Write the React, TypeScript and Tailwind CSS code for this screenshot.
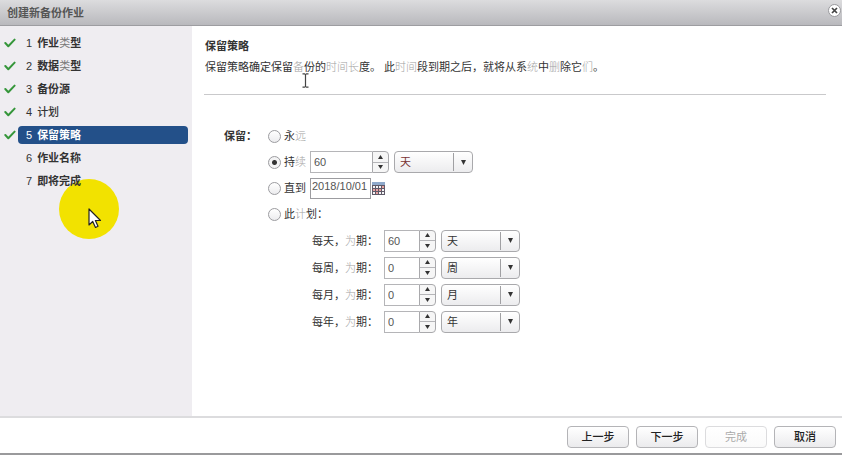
import { useState } from "react";
import type { ReactNode } from "react";

interface Step {
  id: number;
  title: ReactNode;
  done: boolean;
}

interface PlanRow {
  id: string;
  label: string;
  unit: string;
  value: number;
}

const Faint = ({ children }: { children: ReactNode }) => (
  <span className="font-light text-[#a3a3a3]">{children}</span>
);

const steps: Step[] = [
  { id: 1, title: <>作业<span className="font-normal text-[#777]">类</span>型</>, done: true },
  { id: 2, title: <>数据<span className="font-normal text-[#777]">类</span>型</>, done: true },
  { id: 3, title: "备份源", done: true },
  { id: 4, title: <span className="font-medium">计划</span>, done: true },
  { id: 5, title: "保留策略", done: true },
  { id: 6, title: "作业名称", done: false },
  { id: 7, title: "即将完成", done: false },
];

const planRows: PlanRow[] = [
  { id: "day", label: "每天，", unit: "天", value: 60 },
  { id: "week", label: "每周，", unit: "周", value: 0 },
  { id: "month", label: "每月，", unit: "月", value: 0 },
  { id: "year", label: "每年，", unit: "年", value: 0 },
];

const CheckIcon = () => (
  <svg width="12" height="10" viewBox="0 0 12 10" fill="none" aria-hidden="true">
    <path d="M1.3 5 L4.3 8.2 L10.6 1.6" stroke="#35963a" strokeWidth="2" strokeLinecap="round" strokeLinejoin="round" />
  </svg>
);

const CalendarIcon = () => (
  <svg width="13" height="13" viewBox="0 0 13 13" aria-hidden="true">
    <rect width="13" height="13" fill="#5f5a68" />
    <rect width="13" height="3" fill="#8fa9cb" />
    <g fill="#f4f4f6">
      <rect x="1" y="4" width="2" height="2" />
      <rect x="4" y="4" width="2" height="2" />
      <rect x="7" y="4" width="2" height="2" />
      <rect x="1" y="10" width="2" height="2" />
      <rect x="10" y="7" width="2" height="2" />
      <rect x="7" y="10" width="2" height="2" />
      <rect x="10" y="10" width="2" height="2" />
    </g>
    <g fill="#e9a0a0">
      <rect x="10" y="4" width="2" height="2" />
      <rect x="1" y="7" width="2" height="2" />
      <rect x="4" y="7" width="2" height="2" />
      <rect x="7" y="7" width="2" height="2" />
      <rect x="4" y="10" width="2" height="2" />
    </g>
  </svg>
);

const Spinner = ({ label, initial, width }: { label: string; initial: number; width: string }) => {
  const [value, setValue] = useState(initial);

  return (
    <div className={`flex h-[22px] ${width}`}>
      <input
        type="text"
        inputMode="numeric"
        aria-label={label}
        value={value}
        onChange={(e) => setValue(Number(e.target.value) || 0)}
        className="min-w-0 flex-1 border border-r-0 border-[#b5b5b8] bg-white px-[3px] text-[#555] outline-none"
      />
      <div className="flex w-[17px] flex-col overflow-hidden rounded-r border border-[#a9a9ac] bg-[#f6f6f6]">
        <button
          type="button"
          aria-label={`${label} +`}
          onClick={() => setValue(value + 1)}
          className="flex flex-1 items-center justify-center border-b border-[#b5b5b8]"
        >
          <svg width="5" height="4" viewBox="0 0 5 4"><path d="M2.5 0 L5 4 H0 Z" fill="#333" /></svg>
        </button>
        <button
          type="button"
          aria-label={`${label} -`}
          onClick={() => setValue(Math.max(0, value - 1))}
          className="flex flex-1 items-center justify-center"
        >
          <svg width="5" height="4" viewBox="0 0 5 4"><path d="M0 0 H5 L2.5 4 Z" fill="#333" /></svg>
        </button>
      </div>
    </div>
  );
};

const UnitSelect = ({ label, unit, tone }: { label: string; unit: string; tone: string }) => (
  <div className="relative h-[22px] w-[79px]">
    <select
      aria-label={label}
      defaultValue={unit}
      className={`h-full w-full appearance-none rounded border border-[#a9a9ac] bg-linear-to-b from-white to-[#ececee] pl-[5px] outline-none ${tone}`}
    >
      <option>天</option>
      <option>周</option>
      <option>月</option>
      <option>年</option>
    </select>
    <span className="pointer-events-none absolute inset-y-[2px] right-0 flex w-5 items-center justify-center border-l border-[#a0a0a3]">
      <svg width="5" height="5" viewBox="0 0 5 5"><path d="M0 0 H5 L2.5 5 Z" fill="#333" /></svg>
    </span>
  </div>
);

const Radio = ({ id, checked, onSelect, children }: { id: string; checked: boolean; onSelect: (id: string) => void; children: ReactNode }) => (
  <label className="flex w-[42px] items-center gap-[3px] whitespace-nowrap">
    <input
      type="radio"
      name="retention"
      checked={checked}
      onChange={() => onSelect(id)}
      className="h-[13px] w-[13px] shrink-0 appearance-none rounded-full border border-[#9c9ca0] bg-linear-to-b from-white to-[#ececee] checked:bg-[radial-gradient(circle,#333_2px,#f3f3f4_3px)]"
    />
    <span>{children}</span>
  </label>
);

const footerButton =
  "h-[22px] w-[62px] rounded-sm border border-[#b4b4b7] bg-linear-to-b from-white to-[#ebebed] font-medium text-[#222] disabled:border-[#dcdcde] disabled:to-[#fafafa] disabled:font-normal disabled:text-[#aaa]";

const App = () => {
  const [mode, setMode] = useState("for");

  return (
    <div className="relative flex min-h-screen flex-col border-b-2 border-[#9a9a9c] bg-white font-['Liberation_Sans','Noto_Sans_CJK_SC',sans-serif] text-[11px] leading-4 text-[#333]">
      <header className="flex h-[26px] shrink-0 items-center justify-between border-b border-[#9d9da1] bg-linear-to-b from-[#dcdcde] to-[#b9b9bd] pr-px pl-[7px]">
        <h1 className="font-bold text-[#555]">创建新备份作业</h1>
        <button type="button" aria-label="关闭" className="mb-1 flex h-[13px] w-[13px] items-center justify-center rounded-full border border-[#99999d] bg-white">
          <svg width="7" height="7" viewBox="0 0 7 7"><path d="M1 1 L6 6 M6 1 L1 6" stroke="#444" strokeWidth="1.7" /></svg>
        </button>
      </header>

      <div className="flex flex-1">
        <nav className="relative w-48 shrink-0 bg-[#efedf1] pt-2 pr-1 pl-1">
          <div className="absolute top-[153px] left-[59px] h-[60px] w-[60px] rounded-full bg-[#f2e200]" />
          <ol className="relative flex flex-col gap-[5px]">
            {steps.map((step) => (
              <li key={step.id} className="flex items-center">
                <span className="w-[14px]">{step.done && <CheckIcon />}</span>
                <a
                  href={`#step-${step.id}`}
                  className={`flex h-[18px] flex-1 items-center gap-[5px] rounded pl-2 ${step.id === 5 ? "bg-[#235089] text-white" : ""}`}
                >
                  <span>{step.id}</span>
                  <span className="font-bold">{step.title}</span>
                </a>
              </li>
            ))}
          </ol>
          <svg className="absolute top-[182px] left-[88px]" width="14" height="21" viewBox="0 0 14 21" aria-hidden="true">
            <path d="M1 1 V17 L4.7 13.5 L7.5 19.5 L10 18.3 L7.4 12.5 H12.5 Z" fill="#fff" stroke="#222" strokeWidth="1.2" strokeLinejoin="round" />
          </svg>
        </nav>

        <main className="relative flex-1 pt-3 pr-4 pl-3">
          <div className="border-b border-[#c9c9cb] pb-[19px]">
            <h2 className="pl-px font-bold">保留策略</h2>
            <p className="mt-[5px] pl-px">
              保留策略确定保留<Faint>备</Faint>份的<Faint>时间长</Faint>度。 此<Faint>时间</Faint>段到期之后，就将从系<Faint>统</Faint>中<Faint>删</Faint>除它<Faint>们</Faint>。
            </p>
          </div>
          <svg className="absolute top-[47px] left-[110px]" width="7" height="15" viewBox="0 0 7 15" aria-hidden="true">
            <path d="M0.5 0.8 H2.5 L3.5 1.6 L4.5 0.8 H6.5 M3.5 1.6 V13.4 M0.5 14.2 H2.5 L3.5 13.4 L4.5 14.2 H6.5" fill="none" stroke="#444" strokeWidth="1.2" />
          </svg>

          <form className="flex pt-7 pl-5">
            <div className="flex h-[26px] w-11 items-center font-bold whitespace-nowrap">保留：</div>
            <div>
              <div className="flex h-[26px] items-center">
                <Radio id="forever" checked={mode === "forever"} onSelect={setMode}>永<Faint>远</Faint></Radio>
              </div>
              <div className="flex h-[26px] items-center">
                <Radio id="for" checked={mode === "for"} onSelect={setMode}>持<Faint>续</Faint></Radio>
                <div className="flex gap-[5px]">
                  <Spinner label="持续" initial={60} width="w-[79px]" />
                  <UnitSelect label="持续单位" unit="天" tone="text-[#7a3333]" />
                </div>
              </div>
              <div className="flex h-[26px] items-center">
                <Radio id="until" checked={mode === "until"} onSelect={setMode}>直到</Radio>
                <input
                  type="text"
                  aria-label="日期"
                  defaultValue="2018/10/01"
                  className="h-[21px] w-[61px] border border-[#9c9ca0] bg-white pb-1 pl-px text-[#555] outline-none"
                />
                <button type="button" aria-label="选择日期" className="ml-px">
                  <CalendarIcon />
                </button>
              </div>
              <div className="flex h-[26px] items-center">
                <Radio id="plan" checked={mode === "plan"} onSelect={setMode}>此<Faint>计</Faint>划：</Radio>
              </div>
              <div className="pl-11">
                {planRows.map((row) => (
                  <div key={row.id} className="flex h-[27px] items-center">
                    <span className="w-[72px] whitespace-nowrap">{row.label}<Faint>为</Faint>期：</span>
                    <div className="flex gap-[5px]">
                      <Spinner label={row.label} initial={row.value} width="w-[52px]" />
                      <UnitSelect label={`${row.label}单位`} unit={row.unit} tone="text-[#333]" />
                    </div>
                  </div>
                ))}
              </div>
            </div>
          </form>
        </main>
      </div>

      <footer className="flex shrink-0 justify-end gap-[7px] border-t-2 border-[#dcdcde] pt-2 pr-[6px] pb-[5px]">
        <button type="button" className={footerButton}>上一步</button>
        <button type="button" className={footerButton}>下一步</button>
        <button type="button" disabled className={footerButton}>完成</button>
        <button type="button" className={footerButton}>取消</button>
      </footer>
    </div>
  );
};

export default App;
